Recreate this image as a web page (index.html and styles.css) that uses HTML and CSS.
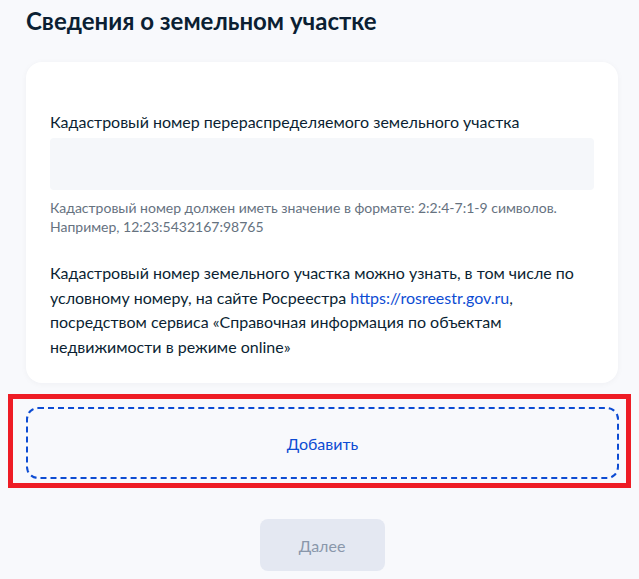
FILE: index.html
```html
<!DOCTYPE html>
<html lang="ru">
<head>
    <meta charset="UTF-8">
    <meta name="viewport" content="width=device-width, initial-scale=1.0">
    <title>Сведения о земельном участке</title>
    <link rel="stylesheet" href="styles.css">
</head>
<body>

    <div class="page">
        <h1>Сведения о земельном участке</h1>

        <div class="card">
            <label for="cadastr">Кадастровый номер перераспределяемого земельного участка</label>
            <input type="text" id="cadastr" name="cadastr">
            <div class="hint">Кадастровый номер должен иметь значение в формате: 2:2:4-7:1-9 символов. Например, 12:23:5432167:98765</div>

            <p class="info">Кадастровый номер земельного участка можно узнать, в том числе по условному номеру, на сайте Росреестра <a href="#">https://rosreestr.gov.ru</a>, посредством сервиса «Справочная информация по объектам недвижимости в режиме online»</p>
        </div>

        <div class="highlight">
            <button class="add-button">Добавить</button>
        </div>

        <div class="actions">
            <button class="next-button" disabled>Далее</button>
        </div>
    </div>

</body>
</html>
```

FILE: styles.css
```css
body {
    font-family: Lato, "Noto Sans", sans-serif;
    background-color: #f8f9fc;
    color: #0b1f33;
    margin: 0;
}

.page {
    width: 592px;
    padding: 0 0 0 26px;
}

h1 {
    font-size: 24px;
    line-height: 32px;
    font-weight: 700;
    margin: 0;
    padding-top: 5px;
}

.card {
    background-color: #fff;
    border-radius: 16px;
    box-shadow: 0 1px 6px rgba(11, 31, 51, 0.04);
    margin-top: 25px;
    padding: 48px 24px 24px;
}

.card label {
    display: block;
    font-size: 16px;
    line-height: 24px;
}

.card input {
    display: block;
    box-sizing: border-box;
    width: 100%;
    height: 52px;
    margin-top: 4px;
    border: none;
    border-radius: 4px;
    background-color: #f5f7fa;
}

.hint {
    font-size: 14px;
    line-height: 19px;
    color: #66727f;
    margin-top: 8px;
}

.info {
    font-size: 16px;
    line-height: 24.6px;
    margin: 25px 0 0;
}

.info a {
    color: #0d4cd3;
    text-decoration: none;
}

.highlight {
    border: 5px solid #ee1c25;
    margin: 11px -13px 0 -18px;
    padding: 8px 7px 4px 13px;
}

.add-button {
    display: block;
    width: 100%;
    height: 72px;
    background: transparent;
    border: 2px dashed #0d4cd3;
    border-radius: 12px;
    color: #0d4cd3;
    font-family: Lato, "Noto Sans", sans-serif;
    font-size: 16px;
    cursor: pointer;
}

.actions {
    display: flex;
    justify-content: center;
    margin-top: 31px;
}

.next-button {
    width: 125px;
    height: 52px;
    border: none;
    border-radius: 8px;
    background-color: #e4e8f2;
    color: #8a97ab;
    font-family: Lato, "Noto Sans", sans-serif;
    font-size: 16px;
}
```
